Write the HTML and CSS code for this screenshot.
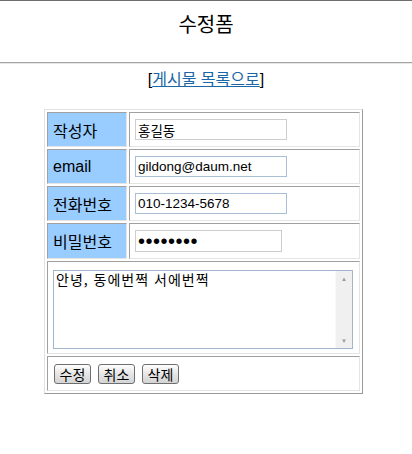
FILE: index.html
```html
<!DOCTYPE html>
<html lang="ko">
<head>
<meta charset="utf-8">
<title>수정폼</title>
<link rel="stylesheet" href="styles.css">
</head>
<body>
<div class="topline"></div>
<h3 class="title">수정폼</h3>
<hr class="rule">
<div class="nav">[<a href="#" class="nav-link">게시물 목록으로</a>]</div>
<form class="form">
<table class="board">
  <tr class="row">
    <td class="label">작성자</td>
    <td class="value"><input class="field" type="text" value="홍길동"></td>
  </tr>
  <tr class="row">
    <td class="label">email</td>
    <td class="value"><input class="field field-blue" type="text" value="gildong@daum.net"></td>
  </tr>
  <tr class="row">
    <td class="label">전화번호</td>
    <td class="value"><input class="field field-blue" type="text" value="010-1234-5678"></td>
  </tr>
  <tr class="row row-tall">
    <td class="label">비밀번호</td>
    <td class="value"><input class="field field-pass" type="password" value="12345678"></td>
  </tr>
  <tr>
    <td class="area-cell" colspan="2">
      <div class="area">
        <textarea class="area-text">안녕, 동에번쩍 서에번쩍</textarea>
        <div class="scrollbar"><span class="arrow">▲</span><span class="arrow">▼</span></div>
      </div>
    </td>
  </tr>
  <tr class="row">
    <td class="btn-cell" colspan="2">
      <button type="button" class="btn">수정</button><button type="button" class="btn">취소</button><button type="button" class="btn">삭제</button>
    </td>
  </tr>
</table>
</form>
</body>
</html>
```
FILE: styles.css
```css
html, body {
  margin: 0;
  padding: 0;
  background: #fff;
}
body {
  font-family: "Liberation Sans", "Noto Sans CJK KR", sans-serif;
  color: #000;
}
.topline {
  height: 0;
  border-top: 1px solid #6e6e6e;
}
.title {
  margin: 0;
  padding-top: 12px;
  height: 49px;
  line-height: 24px;
  font-size: 20px;
  font-weight: normal;
  text-align: center;
}
.rule {
  margin: 0;
  height: 0;
  border: 0;
  border-top: 1px solid #a4a4a4;
  border-bottom: 1px solid #e6e6e6;
}
.nav {
  margin-top: 6px;
  line-height: 20px;
  font-size: 16px;
  text-align: center;
}
.nav-link {
  color: #1a66a6;
  text-decoration: underline;
}
.form {
  margin: 0;
}
.board {
  margin: 19px 0 0 44px;
  border-collapse: separate;
  border-spacing: 2px;
  border: 1px solid;
  border-color: #e2e2e2 #9a9a9a #9a9a9a #e2e2e2;
}
.board td {
  border: 1px solid;
  border-color: #a0a0a0 #e4e4e4 #e4e4e4 #a0a0a0;
  box-sizing: border-box;
  padding: 0;
}
.row td {
  height: 35px;
}
.row-tall td {
  height: 36px;
}
.label {
  width: 80px;
  background: #99ccff;
  padding-left: 5px !important;
  font-size: 16px;
}
.value {
  width: 231px;
  padding-left: 5px !important;
}
.field {
  display: block;
  box-sizing: border-box;
  width: 152px;
  height: 21px;
  padding: 0 2px;
  border: 1px solid #cdcdcd;
  font-family: "Liberation Sans", "Noto Sans CJK KR", sans-serif;
  font-size: 13.5px;
  color: #000;
  outline: none;
}
.field-blue {
  border-color: #a9bfd6;
}
.field-pass {
  width: 147px;
  height: 22px;
  font-size: 20px;
  letter-spacing: 0.5px;
}
.area-cell {
  height: 93px;
  padding: 8px 5px 4px 5px !important;
}
.area {
  display: flex;
  width: 300px;
  height: 79px;
  box-sizing: border-box;
  border: 1px solid #9fb6cd;
}
.area-text {
  flex: 1;
  margin: 0;
  border: 0;
  padding: 0 2px;
  resize: none;
  outline: none;
  overflow: hidden;
  font-family: "Noto Sans CJK KR", sans-serif;
  font-size: 14px;
  line-height: 16px;
  letter-spacing: 1px;
  color: #000;
}
.scrollbar {
  width: 16px;
  background: #f0f0f0;
  border-left: 1px solid #f8f8f8;
  display: flex;
  flex-direction: column;
  justify-content: space-between;
  align-items: center;
  padding: 4px 0 3px;
}
.arrow {
  font-size: 6px;
  line-height: 8px;
  color: #9a9a9a;
}
.btn-cell {
  padding-left: 6px !important;
}
.btn {
  width: 37px;
  height: 20px;
  margin: 0 7px 0 0;
  padding: 0;
  border: 1px solid #6f6f6f;
  border-radius: 3px;
  background: linear-gradient(#fdfdfd, #e6e6e6 50%, #d4d4d4);
  font-family: "Noto Sans CJK KR", sans-serif;
  font-size: 14px;
  line-height: 18px;
  color: #000;
  vertical-align: middle;
}
```
